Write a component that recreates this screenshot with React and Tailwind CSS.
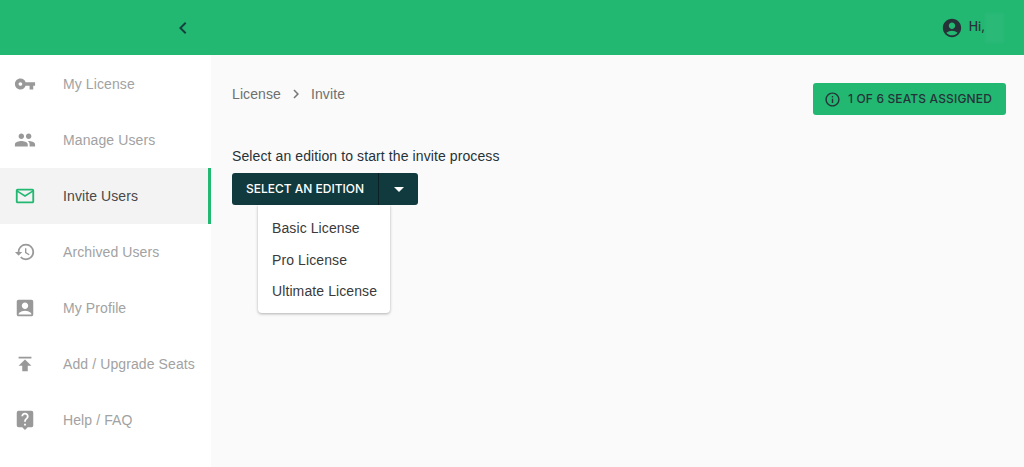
import React from "react";
import { MdVpnKey, MdPeople, MdMailOutline, MdRestore, MdAccountBox, MdPublish, MdLiveHelp, MdAccountCircle, MdInfoOutline, MdChevronLeft, MdChevronRight, MdArrowDropDown } from "react-icons/md";

const items = [
  { label: "My License", Icon: MdVpnKey },
  { label: "Manage Users", Icon: MdPeople },
  { label: "Invite Users", Icon: MdMailOutline, active: true },
  { label: "Archived Users", Icon: MdRestore },
  { label: "My Profile", Icon: MdAccountBox },
  { label: "Add / Upgrade Seats", Icon: MdPublish },
  { label: "Help / FAQ", Icon: MdLiveHelp },
];

export default function App() {
  return (
    <div className="flex h-[467px] w-[1024px] flex-col overflow-hidden bg-[#fafafa] font-['Liberation_Sans',sans-serif] text-[14px] tracking-[0.1px]">
      <header className="flex h-[55px] shrink-0 items-center bg-[#22b872]">
        <div className="flex w-[211px] shrink-0 justify-end pr-[16px]">
          <MdChevronLeft className="text-[#16403f]" size={24} />
        </div>
        <div className="ml-auto flex items-center pr-[20px] text-[#263238]">
          <MdAccountCircle size={22} className="mr-px" />
          <span className="ml-[5px] font-['Inter',sans-serif] text-[12.5px] font-medium tracking-normal">Hi,</span>
          <span className="h-[30px] w-[19px] bg-[#2bb977] blur-[1px]" />
        </div>
      </header>
      <div className="flex min-h-0 flex-1">
        <nav className="w-[211px] shrink-0 bg-white pt-px">
          {items.map(({ label, Icon, active }) => (
            <div
              key={label}
              className={
                active
                  ? "flex h-[56px] items-center border-r-[3px] border-[#22b872] bg-[#f3f3f3] pl-[14px] text-[#484848]"
                  : "flex h-[56px] items-center pl-[14px] text-[#a2a2a2]"
              }
            >
              <Icon size={22} className={active ? "text-[#22b872]" : "text-[#999999]"} />
              <span className="ml-[27px]">{label}</span>
            </div>
          ))}
        </nav>
        <main className="min-w-0 flex-1 pl-[21px] pr-[18px] pt-[28px]">
          <div className="flex items-start justify-between">
            <div className="flex h-[22px] items-center text-[#6f6f6f]">
              <span>License</span>
              <MdChevronRight size={18} className="mx-[6px] text-[#777777]" />
              <span>Invite</span>
            </div>
            <div className="flex h-[32px] w-[193px] items-center rounded-[3px] bg-[#22b872] pl-[11px] font-['Inter',sans-serif] text-[12px] font-medium tracking-[0.15px] text-[#263238]">
              <MdInfoOutline size={17} />
              <span className="ml-[7px]">1 OF 6 SEATS ASSIGNED</span>
            </div>
          </div>
          <p className="mt-[31px] leading-[20px] text-[#263238]">Select an edition to start the invite process</p>
          <div className="relative mt-[7px] w-[186px]">
            <div className="flex h-[32px] items-center rounded-[3px] bg-[#113a3f] font-['Inter',sans-serif] text-[12px] font-medium tracking-normal text-white">
              <span className="flex h-full w-[147px] items-center justify-center border-r border-[#0a2226]">SELECT AN EDITION</span>
              <span className="flex flex-1 justify-center"><MdArrowDropDown size={24} /></span>
            </div>
            <ul className="absolute left-[26px] top-[32px] w-[132px] rounded-b-[4px] bg-white pb-[5px] pt-[8px] text-[#3a3a3a] shadow-[0_1px_3px_rgba(0,0,0,0.3)]">
              <li className="flex h-[31.5px] items-center pl-[14px]">Basic License</li>
              <li className="flex h-[31.5px] items-center pl-[14px]">Pro License</li>
              <li className="flex h-[31.5px] items-center pl-[14px]">Ultimate License</li>
            </ul>
          </div>
        </main>
      </div>
    </div>
  );
}
